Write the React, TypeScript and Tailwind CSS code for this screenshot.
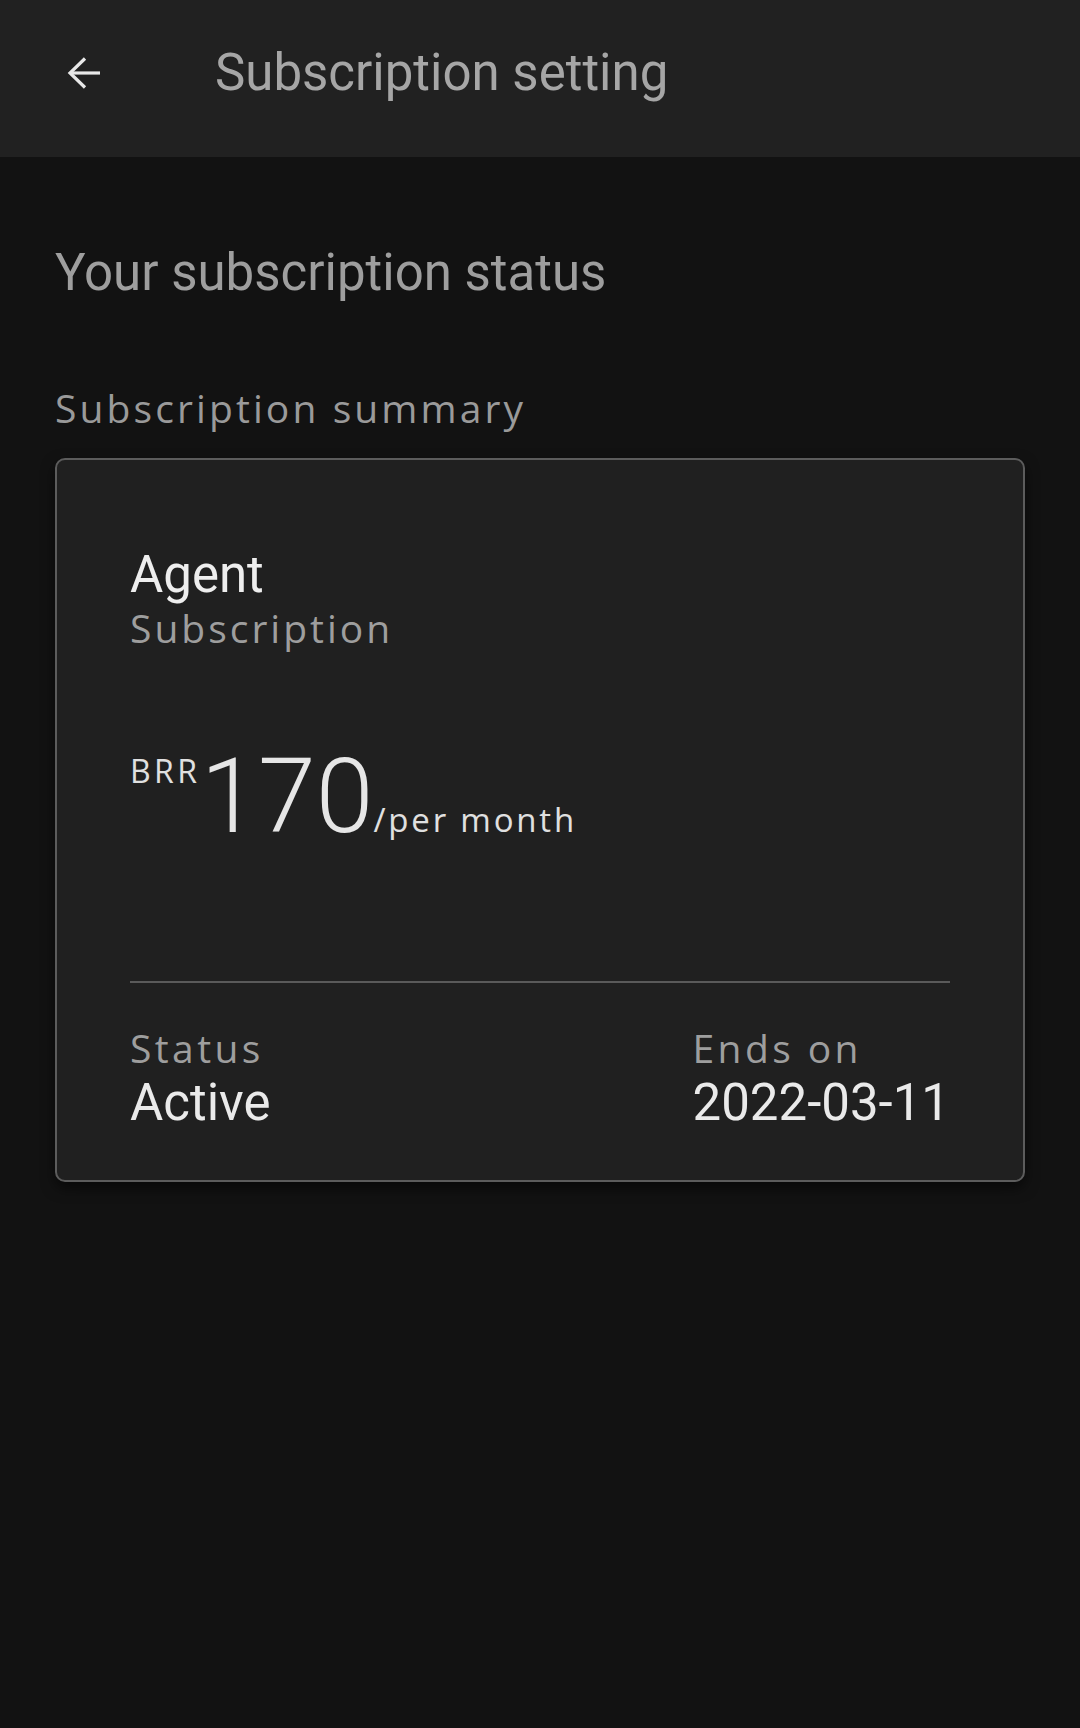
export default function App() {
  return (
    <div className="min-h-[1728px] w-full bg-[#121212] font-['Roboto',sans-serif]">
      {/* App bar */}
      <header className="flex h-[157px] items-center bg-[#212121] pb-[12px]">
        <button className="ml-[68px] flex h-[32px] w-[32px] items-center justify-center text-[#e8e8e8]">
          <svg width="32" height="32" viewBox="0 0 32 32" fill="none" stroke="currentColor" strokeWidth="3.2" className="overflow-visible">
            <path d="M32 16H2" />
            <path d="M17 1.5L2 16l15 14.5" />
          </svg>
        </button>
        <h1 className="ml-[115px] text-[51px] leading-[60px] font-normal text-[#a6a6a6]">Subscription setting</h1>
      </header>

      <main className="px-[55px]">
        <h2 className="mt-[87px] text-[51px] leading-[58px] font-normal text-[#9e9e9e]">Your subscription status</h2>

        <p className="mt-[83px] font-['Open_Sans',sans-serif] text-[39px] leading-[46px] tracking-[3.1px] text-[#9a9a9a]">
          Subscription summary
        </p>

        {/* Summary card */}
        <section className="mt-[27px] rounded-[10px] border-2 border-[#5c5c5c] bg-[#202020] px-[73px] pt-[85px] pb-[47px] shadow-[0_6px_14px_rgba(0,0,0,0.55)]">
          <div className="text-[51px] leading-[60px] text-[#eeeeee]">Agent</div>
          <div className="font-['Open_Sans',sans-serif] text-[39px] leading-[46px] tracking-[3px] text-[#9e9e9e]">Subscription</div>

          <div className="mt-[96px] flex items-baseline">
            <span className="mt-[9px] self-start font-['Open_Sans',sans-serif] text-[32px] leading-[30px] tracking-[3.4px] text-[#e0e0e0]">BRR</span>
            <span className="text-[104px] leading-[100px] font-light text-[#e6e6e6]">170</span>
            <span className="font-['Open_Sans',sans-serif] text-[33px] leading-[40px] tracking-[2.8px] text-[#e0e0e0]">/per month</span>
          </div>

          <div className="mt-[134px] h-[2px] bg-[#5a5a5a]" />

          <div className="mt-[42px] flex justify-between">
            <div>
              <div className="font-['Open_Sans',sans-serif] text-[39px] leading-[46px] tracking-[3.4px] text-[#9e9e9e]">Status</div>
              <div className="mt-[2px] text-[51px] leading-[60px] text-[#eaeaea]">Active</div>
            </div>
            <div>
              <div className="font-['Open_Sans',sans-serif] text-[39px] leading-[46px] tracking-[3.4px] text-[#9e9e9e]">Ends on</div>
              <div className="mt-[2px] text-[51px] leading-[60px] text-[#eaeaea]">2022-03-11</div>
            </div>
          </div>
        </section>
      </main>
    </div>
  );
}
